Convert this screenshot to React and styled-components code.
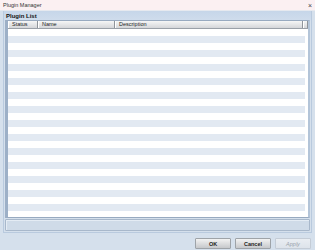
import React from "react";
import styled, { createGlobalStyle } from "styled-components";

const Global = createGlobalStyle`
  html, body { margin: 0; padding: 0; }
  body { width: 315px; height: 250px; overflow: hidden; font-family: "Liberation Sans", Arial, sans-serif; }
`;

const Window = styled.div`
  width: 315px;
  height: 250px;
  display: flex;
  flex-direction: column;
  background: #d5e0ec;
`;

const TitleBar = styled.div`
  height: 10px;
  flex: none;
  display: flex;
  align-items: center;
  justify-content: space-between;
  padding: 0 3px 0 3px;
  background: #fbf0f2;
  border-bottom: 1px solid #e6e9ef;
  font-size: 5.5px;
  color: #333;
`;

const Close = styled.span`
  font-size: 7px;
  color: #444;
  line-height: 1;
`;

const Body = styled.div`
  flex: 1;
  display: flex;
  flex-direction: column;
  padding: 0 3px 1px 3px;
  min-height: 0;
`;

const Group = styled.div`
  flex: 1;
  min-height: 0;
  display: flex;
  flex-direction: column;
  background: linear-gradient(#c6d6e9 0px, #cfdcec 9px, #d5e0ec 10px);
  border: 1px solid #b9cade;
  border-top: none;
  padding: 0 1px 1px 1px;
`;

const GroupTitle = styled.div`
  font-size: 6px;
  font-weight: bold;
  color: #111;
  height: 9px;
  line-height: 10px;
  padding-left: 1px;
`;

const TableFrame = styled.div`
  flex: 1;
  min-height: 0;
  display: flex;
  flex-direction: column;
  background: #fff;
  border: 1px solid #98aac0;
  border-left: 3px solid #9db0c7;
  border-right: 2px solid #b3c4d8;
  overflow: hidden;
`;

const HeaderRow = styled.div`
  display: grid;
  grid-template-columns: 30px 77px 1fr 5px;
  height: 7px;
  flex: none;
  background: linear-gradient(#f6f6f6, #d4d6d9);
  border-bottom: 1px solid #9aa0a8;
`;

const HeaderCell = styled.div`
  font-size: 5.5px;
  line-height: 7px;
  color: #1a1a1a;
  padding-left: 4px;
  border-right: 1px solid #8f949a;
  box-shadow: inset 1px 0 0 #ffffff;
  white-space: nowrap;
`;

const Rows = styled.div`
  flex: 1;
  display: flex;
  flex-direction: column;
  padding-right: 3px;
`;

const Row = styled.div`
  height: 7px;
  flex: none;
  background: ${(p) => (p.$alt ? "#e2e9f2" : "#ffffff")};
`;

const StatusField = styled.div`
  height: 10px;
  flex: none;
  margin-top: 1px;
  background: #cfdbe8;
  border: 1px solid #a8b8cb;
  border-radius: 1px;
  box-shadow: inset 1px 1px 0 #e4ecf4;
`;

const ButtonRow = styled.div`
  flex: none;
  display: flex;
  justify-content: flex-end;
  gap: 4px;
  padding: 5px 1px 0 0;
`;

const Button = styled.div`
  width: 34px;
  height: 9px;
  display: flex;
  align-items: center;
  justify-content: center;
  font-size: 5.5px;
  font-weight: ${(p) => (p.$disabled ? "normal" : "bold")};
  font-style: ${(p) => (p.$disabled ? "italic" : "normal")};
  color: ${(p) => (p.$disabled ? "#9aa3ad" : "#222")};
  background: ${(p) =>
    p.$disabled ? "linear-gradient(#e9edf2, #dde3ea)" : "linear-gradient(#f2f2f2, #c6c8cb)"};
  border: 1px solid ${(p) => (p.$disabled ? "#c4ccd6" : "#9ea3a8")};
  border-radius: 1px;
`;

export default function App() {
  const rows = Array.from({ length: 28 }, (_, i) => i);
  return (
    <>
      <Global />
      <Window>
        <TitleBar>
          <span>Plugin Manager</span>
          <Close>×</Close>
        </TitleBar>
        <Body>
          <Group>
            <GroupTitle>Plugin List</GroupTitle>
            <TableFrame>
              <HeaderRow>
                <HeaderCell>Status</HeaderCell>
                <HeaderCell>Name</HeaderCell>
                <HeaderCell>Description</HeaderCell>
                <HeaderCell />
              </HeaderRow>
              <Rows>
                {rows.map((i) => (
                  <Row key={i} $alt={i % 2 === 1} />
                ))}
              </Rows>
            </TableFrame>
            <StatusField />
          </Group>
          <ButtonRow>
            <Button>OK</Button>
            <Button>Cancel</Button>
            <Button $disabled>Apply</Button>
          </ButtonRow>
        </Body>
      </Window>
    </>
  );
}
